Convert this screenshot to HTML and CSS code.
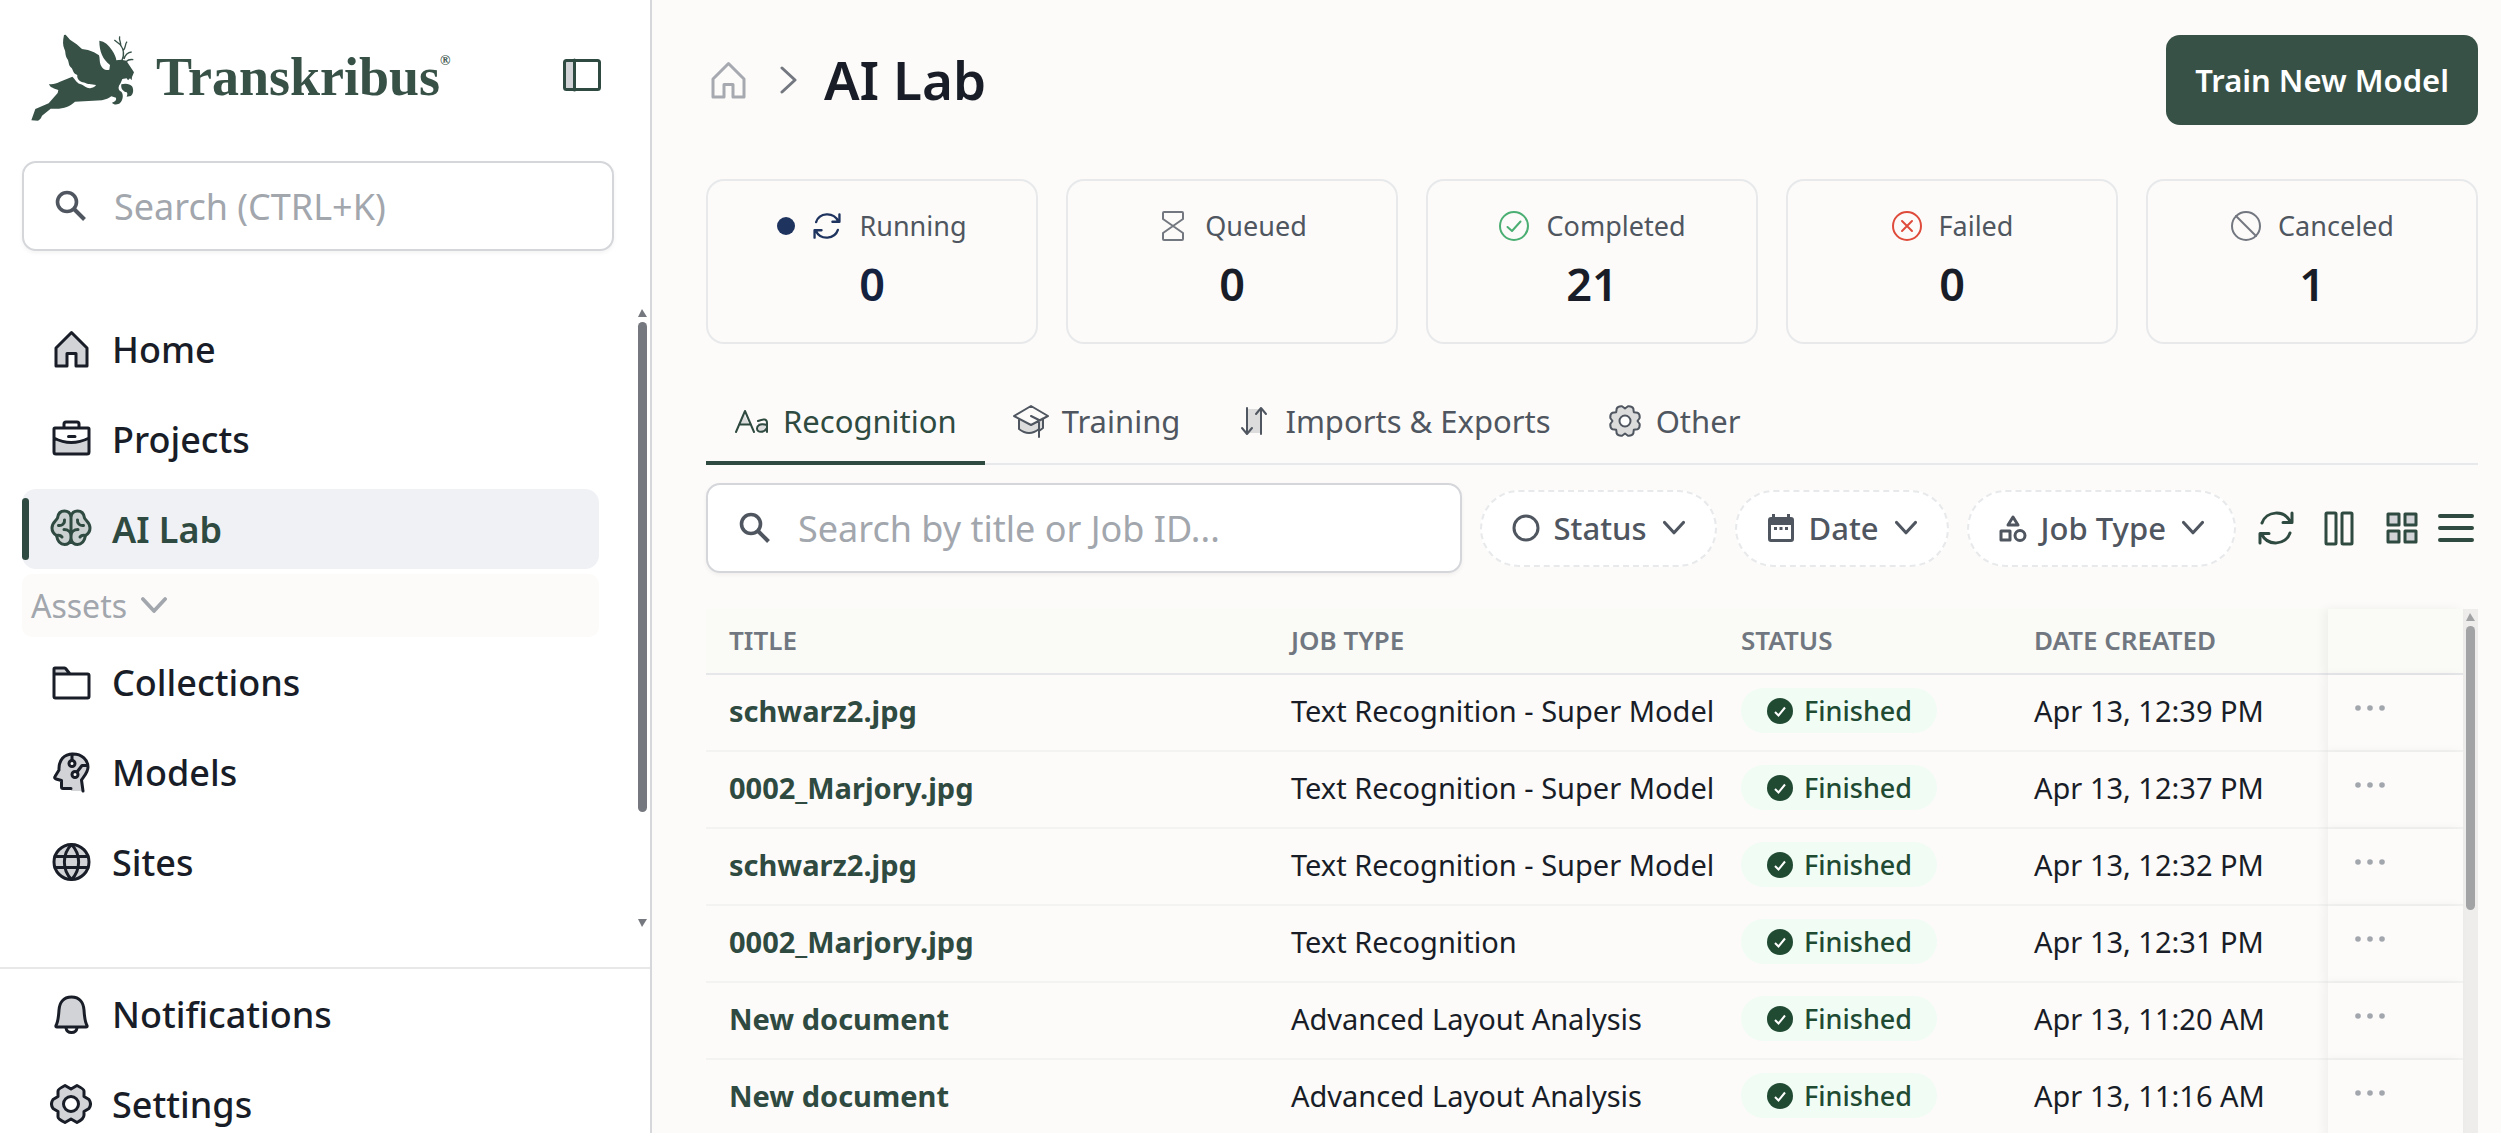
FILE: index.html
```html
<!DOCTYPE html>
<html lang="en">
<head>
<meta charset="utf-8">
<title>AI Lab - Transkribus</title>
<link rel="stylesheet" href="styles.css">
</head>
<body>
<svg class="sprite" aria-hidden="true">
  <symbol id="search" viewBox="0 0 32 32"><circle cx="12" cy="12" r="9.500" fill="none" stroke="currentColor" stroke-width="3.600"/><path d="M19 19 29.500 29.500" fill="none" stroke="currentColor" stroke-width="4"/></symbol>
  <symbol id="home" viewBox="0 0 42 42"><path class="tone" d="M21.500 4.500 37 20V38H26V25.500H17V38H6V20Z"/></symbol>
  <symbol id="brain" viewBox="0 0 42 42"><path class="tone" d="M21 8C20 4.500 17.500 3 14.500 3 10.500 3 8 6 7.500 10 6.500 12.500 2 14.500 2 20 2 24 4 26 6.500 27.500 7.500 33 10.500 36.500 14.500 36.500 18 36.500 20 34.500 21 31.500 22 34.500 24 36.500 27.500 36.500 31.500 36.500 34.500 33 35.500 27.500 38 26 40 24 40 20 40 14.500 35.500 12.500 34.500 10 34 6 31.500 3 27.500 3 24.500 3 22 4.500 21 8Z"/><path class="line" d="M21 8V32M14.500 12C15 15.500 12 18 8.500 17.500M27.500 12C27 15.500 30 18 33.500 17.500M14 21.500C18 21.500 21 24 21 28M28 21.500C24 21.500 21 24 21 28M6.500 27.500C8 27 10.500 27 12 29M35.500 27.500C34 27 31.500 27 30 29"/></symbol>
  <symbol id="briefcase" viewBox="0 0 42 42"><path class="shade" d="M4 20Q21 30 39 20V36H4Z"/><path class="line" d="M5 10H38Q39 10 39 11V34Q39 36 37 36H6Q4 36 4 34V11Q4 10 5 10ZM14 10V6Q14 4 16 4H27Q29 4 29 6V10M4 20Q21 29 39 20M18.500 18.500H25"/></symbol>
  <symbol id="folder" viewBox="0 0 42 42"><path class="shade" d="M4 13V7H15L20 13Z"/><path class="line" d="M4 13V8Q4 7 5 7H14.500Q15.500 7 16 8L20 13H37.500Q39 13 39 14.500V35.500Q39 37 37.500 37H5.500Q4 37 4 35.500V13H20"/></symbol>
  <symbol id="head" viewBox="0 0 42 42"><path class="shade" d="M21 38H11.500V29L4.500 26.500 9.500 16C10 8 15 3 23 3 32 3 38 9 38 16 38 22 33 26 31.500 29L33 40H21Z"/><path class="line" d="M21 37.500H13Q11.500 37.500 11.500 36V29.500L6 28Q4 27 5 25.500L9 19C8.500 9 14 3 23 3 32 3 38 9 38 16 38 22 33 26 31.500 29L33 40M22 3V9M27 21 32 14.500H37"/><circle cx="22" cy="12.500" r="3" class="hole"/><circle cx="25" cy="23.500" r="3" class="hole"/></symbol>
  <symbol id="globe" viewBox="0 0 42 42"><circle class="tone" cx="21.500" cy="21" r="17.500"/><path class="line" d="M5 15.500H38M5 26.500H38M21.500 3.500C12 13 12 29 21.500 38.500 31 29 31 13 21.500 3.500Z"/></symbol>
  <symbol id="bell" viewBox="0 0 42 42"><path class="tone" d="M21.500 4C13 4 9.500 10 9 17 8.500 25 8 29 6 32.500Q5.500 34 7 34H36Q37.500 34 37 32.500C35 29 34.500 25 34 17 33.500 10 30 4 21.500 4Z"/><path class="line" d="M16 35C17 41 26 41 27 35"/></symbol>
  <symbol id="gear" viewBox="0 0 42 42"><path class="tone" d="M39 16.500Q42 21 39 25.500L34 28.500V32Q34 36 27 39.500L21 36 15 39.500Q8 36 8 34V28.500L3 25.500Q0 21 3 16.500L8 13.500V8Q8 6 15 2.500L21 6 27 2.500Q34 6 34 8V13.500Z"/><circle class="hole" cx="21" cy="21" r="7.500"/></symbol>
  <symbol id="gear8" viewBox="-18 -18 36 36"><path class="tone" d="M12.500 0 14.700 3Q15 7 12.500 8.300L8.800 8.800 8.300 12.500Q7 15 3 14.700L0 12.500-3 14.700Q-7 15-8.300 12.500L-8.800 8.800-12.500 8.300Q-15 7-14.700 3L-12.500 0-14.700-3Q-15-7-12.500-8.300L-8.800-8.800-8.300-12.500Q-7-15-3-14.700L0-12.500 3-14.700Q7-15 8.300-12.500L8.800-8.800 12.500-8.300Q15-7 14.700-3Z"/><circle class="hole" r="5.500"/></symbol>
  <symbol id="panel" viewBox="0 0 38 34"><path class="shade" d="M2 2H12V32H2Z"/><rect class="line" x="1.500" y="2.500" width="35" height="29" rx="2"/><path class="line" d="M11.500 2V32"/></symbol>
  <symbol id="down" viewBox="0 0 28 20"><path class="line" d="M2 3 14 16 26 3"/></symbol>
  <symbol id="sync" viewBox="0 0 36 36"><path class="line" d="M4 13C8 1 26-1 32.500 12M34 3V12.500H25M32 23C28 35 10 37 3.500 24M2 33V23.500H11"/></symbol>
  <symbol id="hourglass" viewBox="0 0 32 32"><path class="line" d="M7 2H25Q26 2 26 3V9L16 16 6 9V3Q6 2 7 2ZM16 16 26 23V29Q26 30 25 30H7Q6 30 6 29V23Z"/></symbol>
  <symbol id="done" viewBox="0 0 32 32"><circle class="line" cx="16" cy="16" r="14"/><path class="line" d="M9.500 17 14 21 22.500 11.500"/></symbol>
  <symbol id="fail" viewBox="0 0 32 32"><circle class="line" cx="16" cy="16" r="14"/><path class="line" d="M11 11 21 21M21 11 11 21"/></symbol>
  <symbol id="ban" viewBox="0 0 32 32"><circle class="line" cx="16" cy="16" r="14"/><path class="line" d="M6 6 26 26"/></symbol>
  <symbol id="case" viewBox="0 0 36 36"><path class="shade" d="M6 21 10 11 15 21ZM24 20H33V29H24Z"/><path class="line" d="M2 29 11 8 20 29M5 21.500H17M24 18Q33 14 33 20V29M33 22C25 20 23 23 23 25.500 23 30 30 30 33 25"/></symbol>
  <symbol id="cap" viewBox="0 0 36 36"><path class="shade" d="M6 16V26Q17 36 30 24V14L18 22Z"/><path class="line" d="M18 3 35 13 18 22 1 13ZM6 17V26Q16 34 26 26M30 16V25L26 28M18 13 26 17V34"/></symbol>
  <symbol id="updown" viewBox="0 0 36 36"><path class="shade" d="M11 6H25V30H11Z"/><path class="line" d="M11 5V30M6 25 11 31 16 25M25 31V6M20 11 25 5 30 11"/></symbol>
  <symbol id="circle" viewBox="0 0 28 28"><circle class="line" cx="14" cy="14" r="12"/></symbol>
  <symbol id="calendar" viewBox="0 0 28 28"><path fill="currentColor" fill-rule="evenodd" d="M5 0H8V3H20V0H23V3H24Q27 3 27 6V25Q27 28 24 28H4Q1 28 1 25V6Q1 3 4 3H5ZM4 11V25H24V11ZM7 13H10V16H7ZM12.500 13H15.500V16H12.500ZM18 13H21V16H18Z"/></symbol>
  <symbol id="shapes" viewBox="0 0 28 28"><path class="line" d="M14 3 19 11H9ZM2 17H11V26H2Z"/><circle class="line" cx="21" cy="21.500" r="5"/></symbol>
  <symbol id="columns" viewBox="0 0 36 36"><rect class="line" x="5" y="3" width="10" height="31" rx="1"/><rect class="line" x="21" y="3" width="10" height="31" rx="1"/></symbol>
  <symbol id="grid" viewBox="0 0 36 36"><path class="tone" d="M4 4H15V15H4ZM21 4H32V15H21ZM4 21H15V32H4ZM21 21H32V32H21Z"/></symbol>
  <symbol id="list" viewBox="0 0 36 36"><path class="line heavy" d="M2 6H34M2 18H34M2 30H34"/></symbol>
  <symbol id="tick" viewBox="0 0 26 26"><circle cx="13" cy="13" r="13" fill="currentColor"/><path d="M8 14 11.500 17.500 18 9.500" fill="none" stroke="#fff" stroke-width="2"/></symbol>
  <symbol id="dots" viewBox="0 0 36 8"><g fill="currentColor"><circle cx="5" cy="4" r="2.800"/><circle cx="17" cy="4" r="2.800"/><circle cx="29" cy="4" r="2.800"/></g></symbol>
</svg>

<div class="layout">
  <aside class="sidebar">
    <div class="brand-row">
      <a class="brand" href="#">
        <svg class="hare" viewBox="30 40 315 264" aria-hidden="true">
          <path fill="currentColor" d="M34 302 46 268 86 251 113 220 115 211C104 206 90 205 87 193 98 195 110 191 120 186L157 171C166 178 168 188 180 193 196 198 200 208 213 205 222 203 226 200 228 196L208 193C200 194 194 188 188 188 176 184 170 174 172 166 158 160 160 150 154 144 144 138 148 126 142 118 134 106 138 96 133 88 128 76 128 64 132 46L137 45 150 60 170 74 186 88 204 91 222 98 237 107C240 116 238 126 242 136 248 148 256 154 268 150L270 136C248 118 238 96 238 63 254 65 266 76 276 92 284 104 288 114 289 122L304 120 319 123 334 146 342 158 336 172 335 182 330 176 324 182 320 176 307 178 302 190 297 198C294 206 296 212 304 216 312 226 308 242 300 250 294 256 280 256 276 249 286 246 290 240 288 234L274 230C268 236 256 240 246 242L165 246C150 260 130 268 104 267L92 267 66 288C64 294 60 300 54 303Z"/>
          <path fill="currentColor" d="M304 194C316 190 330 192 336 200 342 210 340 224 332 229L320 231C324 222 322 216 316 217 308 214 302 206 304 194Z"/>
          <path fill="none" stroke="currentColor" stroke-width="4" d="M306 122C314 104 310 88 302 76M302 80C304 68 296 62 299 50M302 76 283 61M310 92C318 84 314 74 321 66M312 118C316 104 324 98 335 97M318 126C324 120 330 118 340 120"/>
        </svg>
        <span class="wordmark">Transkribus<sup>®</sup></span>
      </a>
      <button class="plain toggle" type="button" aria-label="Collapse sidebar"><svg width="38" height="34"><use href="#panel"/></svg></button>
    </div>
    <label class="search side-search"><svg width="32" height="32"><use href="#search"/></svg><input type="text" aria-label="Search" placeholder="Search (CTRL+K)"></label>
    <div class="nav-wrap">
      <nav class="nav">
        <a class="item" href="#"><svg><use href="#home"/></svg>Home</a>
        <a class="item" href="#"><svg><use href="#briefcase"/></svg>Projects</a>
        <a class="item active" href="#" aria-current="page"><svg><use href="#brain"/></svg>AI Lab</a>
        <button class="group" type="button">Assets<svg width="26" height="19"><use href="#down"/></svg></button>
        <a class="item" href="#"><svg><use href="#folder"/></svg>Collections</a>
        <a class="item" href="#"><svg><use href="#head"/></svg>Models</a>
        <a class="item" href="#"><svg><use href="#globe"/></svg>Sites</a>
      </nav>
      <div class="bar nav-bar" aria-hidden="true"><i class="up"></i><i class="thumb"></i><i class="rest"></i><i class="dn"></i></div>
    </div>
    <div class="side-foot">
      <a class="item" href="#"><svg><use href="#bell"/></svg>Notifications</a>
      <a class="item" href="#"><svg><use href="#gear"/></svg>Settings</a>
    </div>
  </aside>

  <main class="main">
    <header class="top">
      <a class="crumb" href="#" aria-label="Home"><svg width="42" height="42"><use href="#home"/></svg></a>
      <svg class="sep" width="20" height="28" viewBox="0 0 20 28" aria-hidden="true"><path class="line" d="M3 2 16 14 3 26"/></svg>
      <h1>AI Lab</h1>
      <button class="primary" type="button">Train New Model</button>
    </header>

    <section class="cards">
      <div class="card running"><p><i class="dot"></i><svg class="spin"><use href="#sync"/></svg>Running</p><strong>0</strong></div>
      <div class="card"><p><svg><use href="#hourglass"/></svg>Queued</p><strong>0</strong></div>
      <div class="card completed"><p><svg><use href="#done"/></svg>Completed</p><strong>21</strong></div>
      <div class="card failed"><p><svg><use href="#fail"/></svg>Failed</p><strong>0</strong></div>
      <div class="card"><p><svg><use href="#ban"/></svg>Canceled</p><strong>1</strong></div>
    </section>

    <div class="tabs" role="tablist">
      <button class="tab on" role="tab" aria-selected="true"><svg><use href="#case"/></svg>Recognition</button>
      <button class="tab" role="tab"><svg><use href="#cap"/></svg>Training</button>
      <button class="tab" role="tab"><svg><use href="#updown"/></svg>Imports &amp; Exports</button>
      <button class="tab" role="tab"><svg><use href="#gear8"/></svg>Other</button>
    </div>

    <div class="tools">
      <label class="search job-search"><svg width="32" height="32"><use href="#search"/></svg><input type="text" aria-label="Search jobs" placeholder="Search by title or Job ID..."></label>
      <button class="chip" type="button"><svg width="28" height="28"><use href="#circle"/></svg>Status<svg class="caret"><use href="#down"/></svg></button>
      <button class="chip" type="button"><svg width="28" height="28"><use href="#calendar"/></svg>Date<svg class="caret"><use href="#down"/></svg></button>
      <button class="chip" type="button"><svg width="28" height="28"><use href="#shapes"/></svg>Job Type<svg class="caret"><use href="#down"/></svg></button>
      <div class="views">
        <button class="plain" type="button" aria-label="Refresh"><svg><use href="#sync"/></svg></button>
        <button class="plain" type="button" aria-label="Columns"><svg><use href="#columns"/></svg></button>
        <button class="plain" type="button" aria-label="Grid view"><svg><use href="#grid"/></svg></button>
        <button class="plain" type="button" aria-label="List view"><svg><use href="#list"/></svg></button>
      </div>
    </div>

    <div class="jobs">
      <table>
        <colgroup><col><col class="c-type"><col class="c-status"><col class="c-date"><col class="c-act"></colgroup>
        <thead><tr><th>TITLE</th><th>JOB TYPE</th><th>STATUS</th><th>DATE CREATED</th><th class="act"></th></tr></thead>
        <tbody>
          <tr><td><a href="#">schwarz2.jpg</a></td><td>Text Recognition - Super Model</td><td><span class="badge"><svg><use href="#tick"/></svg>Finished</span></td><td>Apr 13, 12:39 PM</td><td class="act"><button class="plain" type="button" aria-label="Actions"><svg><use href="#dots"/></svg></button></td></tr>
          <tr><td><a href="#">0002_Marjory.jpg</a></td><td>Text Recognition - Super Model</td><td><span class="badge"><svg><use href="#tick"/></svg>Finished</span></td><td>Apr 13, 12:37 PM</td><td class="act"><button class="plain" type="button" aria-label="Actions"><svg><use href="#dots"/></svg></button></td></tr>
          <tr><td><a href="#">schwarz2.jpg</a></td><td>Text Recognition - Super Model</td><td><span class="badge"><svg><use href="#tick"/></svg>Finished</span></td><td>Apr 13, 12:32 PM</td><td class="act"><button class="plain" type="button" aria-label="Actions"><svg><use href="#dots"/></svg></button></td></tr>
          <tr><td><a href="#">0002_Marjory.jpg</a></td><td>Text Recognition</td><td><span class="badge"><svg><use href="#tick"/></svg>Finished</span></td><td>Apr 13, 12:31 PM</td><td class="act"><button class="plain" type="button" aria-label="Actions"><svg><use href="#dots"/></svg></button></td></tr>
          <tr><td><a href="#">New document</a></td><td>Advanced Layout Analysis</td><td><span class="badge"><svg><use href="#tick"/></svg>Finished</span></td><td>Apr 13, 11:20 AM</td><td class="act"><button class="plain" type="button" aria-label="Actions"><svg><use href="#dots"/></svg></button></td></tr>
          <tr><td><a href="#">New document</a></td><td>Advanced Layout Analysis</td><td><span class="badge"><svg><use href="#tick"/></svg>Finished</span></td><td>Apr 13, 11:16 AM</td><td class="act"><button class="plain" type="button" aria-label="Actions"><svg><use href="#dots"/></svg></button></td></tr>
        </tbody>
      </table>
      <div class="bar table-bar" aria-hidden="true"><i class="up"></i><i class="thumb"></i></div>
    </div>
  </main>
</div>
</body>
</html>
```
FILE: styles.css
```css
:root {
  --green: #2f4a40;
  --brand: #375147;
  --ink: #181d27;
  --gray: #4f5660;
  --mute: #a2a6ad;
  --line: #e7e9eb;
  --page: #fcfbf9;
}

* { box-sizing: border-box; }

body {
  margin: 0;
  background: var(--page);
  color: var(--ink);
  font-family: "Noto Sans", sans-serif;
  overflow: hidden;
}

button, input { font: inherit; color: inherit; }
a { color: inherit; text-decoration: none; }
svg { flex: none; display: block; }

.sprite { position: absolute; width: 0; height: 0; }
.line { fill: none; stroke: currentColor; stroke-width: var(--sw, 3); stroke-linejoin: round; stroke-linecap: round; }
.heavy { stroke-width: 4; }
.tone { fill: var(--tone, #d2d3d6); stroke: currentColor; stroke-width: var(--sw, 3); stroke-linejoin: round; }
.shade { fill: var(--tone, #d2d3d6); }
.hole { fill: #fff; stroke: currentColor; stroke-width: var(--sw, 3); }

.plain { display: block; padding: 0; border: 0; background: none; }

.layout { display: flex; height: 100vh; overflow: hidden; }

/* Sidebar */
.sidebar {
  flex: none;
  width: 652px;
  border-right: 2px solid #d5d7db;
  background: #fff;
}

.brand-row { display: flex; justify-content: space-between; align-items: center; padding: 33px 49px 0 30px; }
.brand { display: flex; align-items: center; gap: 21px; color: var(--brand); }
.hare { width: 105px; height: 88px; }
.wordmark { font: bold 54px/80px "Liberation Serif", serif; }
.wordmark sup { font-size: 14px; line-height: 14px; vertical-align: 30px; }
.toggle { margin-bottom: 4px; color: var(--green); }

.search {
  display: flex;
  align-items: center;
  height: 90px;
  border: 2px solid #d4d6da;
  border-radius: 14px;
  background: #fff;
  box-shadow: 0 2px 4px rgba(0, 0, 0, .05);
  color: var(--gray);
}
.search input { flex: 1; min-width: 0; padding: 0; border: 0; outline: 0; background: none; font-size: 36px; }
.search input::placeholder { color: var(--mute); opacity: 1; }
.side-search { margin: 40px 36px 0 22px; padding: 0 31px; gap: 27px; }

.nav-wrap { display: flex; gap: 39px; padding: 58px 3px 40px 22px; }
.nav { flex: 1; display: flex; flex-direction: column; gap: 10px; padding-bottom: 25px; }
.item {
  display: flex;
  align-items: center;
  gap: 20px;
  height: 80px;
  padding: 0 28px;
  border-radius: 14px;
  font-size: 36px;
  font-weight: 500;
}
.item svg { width: 42px; height: 42px; }
.item.active {
  position: relative;
  background: #f0f1f5;
  color: var(--green);
  font-weight: 600;
  --tone: #cbd1d1;
}
.item.active::before {
  content: "";
  position: absolute;
  left: 0;
  top: 9px;
  bottom: 9px;
  width: 7px;
  border-radius: 4px;
  background: var(--green);
}
.group {
  display: flex;
  align-items: center;
  gap: 14px;
  height: 63px;
  margin: -5px 0;
  padding: 0 9px;
  border: 0;
  border-radius: 10px;
  background: var(--page);
  color: var(--mute);
  font-size: 32px;
  --sw: 4;
}

.side-foot { display: flex; flex-direction: column; gap: 10px; padding: 5px 22px; border-top: 2px solid #e8e8e9; }

/* Drawn scrollbars */
.bar { display: flex; flex-direction: column; flex: none; color: #75787e; }
.up { border: solid transparent; border-width: 0 5px 8px; border-bottom-color: currentColor; }
.dn { border: solid transparent; border-width: 8px 5px 0; border-top-color: currentColor; }
.thumb { border-radius: 5px; background: currentColor; }
.nav-bar { width: 9px; }
.nav-bar .up, .nav-bar .dn { border-left-width: 4px; }
.nav-bar .thumb { flex: 490; margin-top: 5px; }
.nav-bar .rest { flex: 107; }
.table-bar { width: 15px; padding: 4px 3px; background: #eeedec; color: #a2a3a5; }
.table-bar .up { border-left-width: 4px; }
.table-bar .thumb { height: 284px; margin-top: 5px; }

/* Main column */
.main { flex: 1; min-width: 0; padding: 35px 23px 0 54px; }

.top { display: flex; align-items: center; height: 90px; }
.crumb { margin-left: 1px; color: #a6a9b0; --tone: none; }
.sep { margin: 0 25px 0 30px; color: #737780; }
h1 { margin: 0; font-size: 53px; line-height: 72px; font-weight: 600; }
.primary {
  margin-left: auto;
  height: 90px;
  padding: 0 29px;
  border: 0;
  border-radius: 14px;
  background: var(--brand);
  color: #fff;
  font-size: 31px;
  font-weight: 600;
}

.cards { display: grid; grid-template-columns: repeat(5, 1fr); gap: 28px; margin-top: 54px; }
.card { padding: 26px 0 27px; border: 2px solid var(--line); border-radius: 18px; text-align: center; --sw: 2; }
.card p { display: flex; justify-content: center; align-items: center; gap: 16px; margin: 0 0 8px; font-size: 27px; line-height: 38px; color: var(--gray); }
.card svg { width: 32px; height: 32px; color: #737780; }
.card strong { display: block; font-size: 45px; line-height: 62px; font-weight: 600; }
.card .spin { padding: 2px; color: #1f335f; --sw: 3; }
.dot { width: 18px; height: 18px; border-radius: 50%; background: #1f335f; }
.running strong { color: #14213f; }
.completed svg { color: #4bae72; }
.failed svg { color: #df4b3b; }

.tabs { display: flex; margin-top: 33px; border-bottom: 2px solid var(--line); --sw: 2; --tone: #dcdcdc; }
.tab {
  display: flex;
  align-items: center;
  gap: 13px;
  height: 88px;
  margin-bottom: -2px;
  padding: 4px 28px 0;
  border: 0;
  border-bottom: 4px solid transparent;
  background: none;
  color: var(--gray);
  font-size: 31px;
}
.tab svg { width: 36px; height: 36px; }
.tab .hole { fill: var(--page); }
.tab.on { border-color: var(--green); color: var(--green); }

.tools { display: flex; align-items: center; gap: 18px; margin-top: 18px; }
.job-search { flex: 1; padding: 0 31px; gap: 27px; }
.chip {
  display: flex;
  align-items: center;
  gap: 14px;
  height: 77px;
  padding: 0 30px;
  border: 2px dashed var(--line);
  border-radius: 39px;
  background: #fff;
  color: var(--gray);
  font-size: 31px;
  font-weight: 500;
}
.chip .caret { width: 22px; height: 16px; margin-left: 2px; --sw: 4; }
.views { display: flex; gap: 27px; margin: 0 4px; color: var(--green); }
.views svg { width: 36px; height: 36px; }
.views button:last-child { margin-left: -9px; }

/* Job table */
.jobs { display: flex; margin-top: 36px; }
table { flex: 1; min-width: 0; table-layout: fixed; border-collapse: separate; border-spacing: 0; font-size: 29px; }
.c-type { width: 450px; }
.c-status { width: 293px; }
.c-date { width: 317px; }
.c-act { width: 135px; }
th, td { padding: 0 0 4px 23px; text-align: left; white-space: nowrap; }
th { height: 66px; padding-bottom: 2px; border-bottom: 2px solid #e6e7e8; background: #fafbf6; color: #717780; font-size: 26px; font-weight: 600; }
td { height: 77px; border-bottom: 2px solid #f3f3f2; }
td a { color: var(--green); font-weight: 700; }
.act { position: relative; padding-left: 25px; background: var(--page); box-shadow: -4px 0 10px rgba(0, 0, 0, .05); }
td.act { padding-bottom: 9px; }
th.act { background: #fafbf6; }
.act svg { width: 36px; height: 8px; color: #a2a6ad; }
.badge {
  display: inline-flex;
  align-items: center;
  gap: 11px;
  height: 45px;
  padding: 0 25px 0 26px;
  border-radius: 23px;
  background: #f1fcf5;
  color: #214a33;
  font-size: 27px;
  font-weight: 500;
  vertical-align: middle;
}
.badge svg { width: 26px; height: 26px; }
```
